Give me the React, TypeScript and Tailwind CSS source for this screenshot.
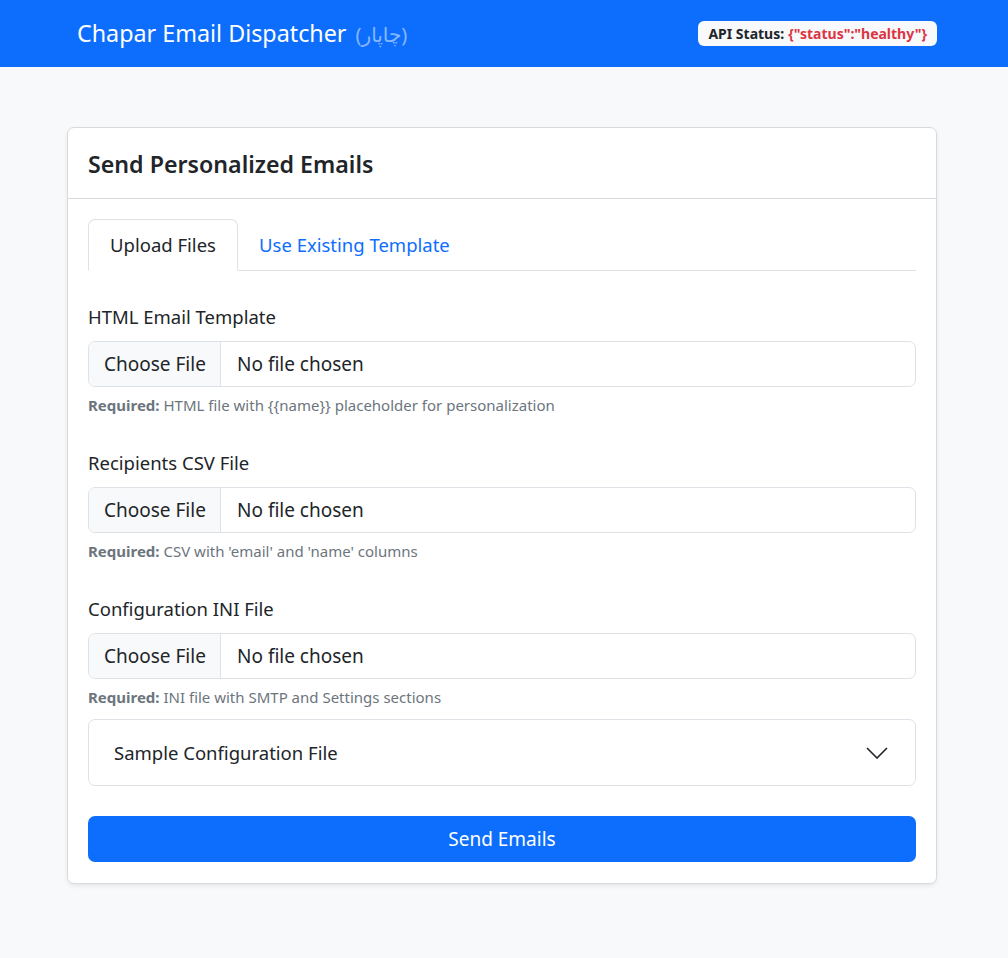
import React from "react";

const font = { fontFamily: '"Noto Sans", "DejaVu Sans", sans-serif' };

function FileInput() {
  return (
    <div className="flex h-[46px] border border-[#dee2e6] rounded-[7px] overflow-hidden bg-white">
      <div className="w-[132px] shrink-0 bg-[#f8f9fa] border-r border-[#dee2e6] flex items-center pl-[15px] pt-[1px] text-[19px] text-[#212529]">
        Choose File
      </div>
      <div className="flex items-center pl-[16px] pt-[1px] text-[19px] text-[#212529]">No file chosen</div>
    </div>
  );
}

function FileGroup({ label, help, last }: { label: string; help: string; last?: boolean }) {
  return (
    <div className={last ? "mb-[10px]" : "mb-[31px]"}>
      <div className="h-[29px] leading-[29px] text-[18.5px] text-[#212529] mb-[10px]">{label}</div>
      <FileInput />
      <div className="mt-[5px] h-[25px] leading-[25px] text-[15px] text-[#6c757d] pt-[1px]">
        <span className="font-bold">Required:</span> {help}
      </div>
    </div>
  );
}

export default function App() {
  return (
    <div className="min-h-screen bg-[#f8f9fa]" style={font}>
      <nav className="h-[67px] bg-[#0d6efd] flex items-center justify-between pl-[77px] pr-[71px]">
        <div className="flex items-baseline text-white">
          <span className="text-[23.3px]">Chapar Email Dispatcher</span>
          <span className="ml-[9px] text-[20px] text-[#86b7fe]">(چاپار)</span>
        </div>
        <div className="h-[25px] px-[10px] flex items-center rounded-[6px] bg-[#f8f9fa] text-[14px] font-bold">
          <span className="text-[#212529]">API Status:</span>
          <span className="ml-[4px] text-[#dc3545]">{'{"status":"healthy"}'}</span>
        </div>
      </nav>
      <div className="pt-[60px] pl-[67px]">
        <div className="w-[870px] bg-white border border-[#d9dadb] rounded-[7px] shadow-[0_2px_4px_rgba(0,0,0,0.075)]">
          <div className="h-[71px] px-[20px] flex items-center border-b border-[#d9dadb]">
            <h4 className="text-[23.2px] font-semibold text-[#212529] mt-[2px]">Send Personalized Emails</h4>
          </div>
          <div className="px-[20px] pt-[20px] pb-[21px]">
            <div className="flex border-b border-[#dee2e6] h-[52px]">
              <div className="-mb-px w-[150px] h-[52px] flex items-center justify-center border border-[#dee2e6] border-b-white rounded-t-[7px] bg-white text-[18.5px] text-[#212529]">
                Upload Files
              </div>
              <div className="h-[51px] flex items-center px-[21px] text-[18.5px] text-[#0d6efd]">
                Use Existing Template
              </div>
            </div>
            <div className="mt-[31px]">
              <FileGroup label="HTML Email Template" help="HTML file with {{name}} placeholder for personalization" />
              <FileGroup label="Recipients CSV File" help="CSV with 'email' and 'name' columns" />
              <FileGroup label="Configuration INI File" help="INI file with SMTP and Settings sections" last />
              <div className="h-[67px] border border-[#dee2e6] rounded-[7px] flex items-center justify-between pl-[25px] pr-[27px]">
                <span className="text-[18.5px] text-[#212529]">Sample Configuration File</span>
                <svg width="22" height="12" viewBox="0 0 22 12" fill="none">
                  <path d="M1 1 L11 11 L21 1" stroke="#212529" strokeWidth="1.6" />
                </svg>
              </div>
              <button className="mt-[30px] w-full h-[46px] rounded-[7px] bg-[#0d6efd] text-white text-[19px] flex items-center justify-center pt-[1px]">
                Send Emails
              </button>
            </div>
          </div>
        </div>
      </div>
    </div>
  );
}
